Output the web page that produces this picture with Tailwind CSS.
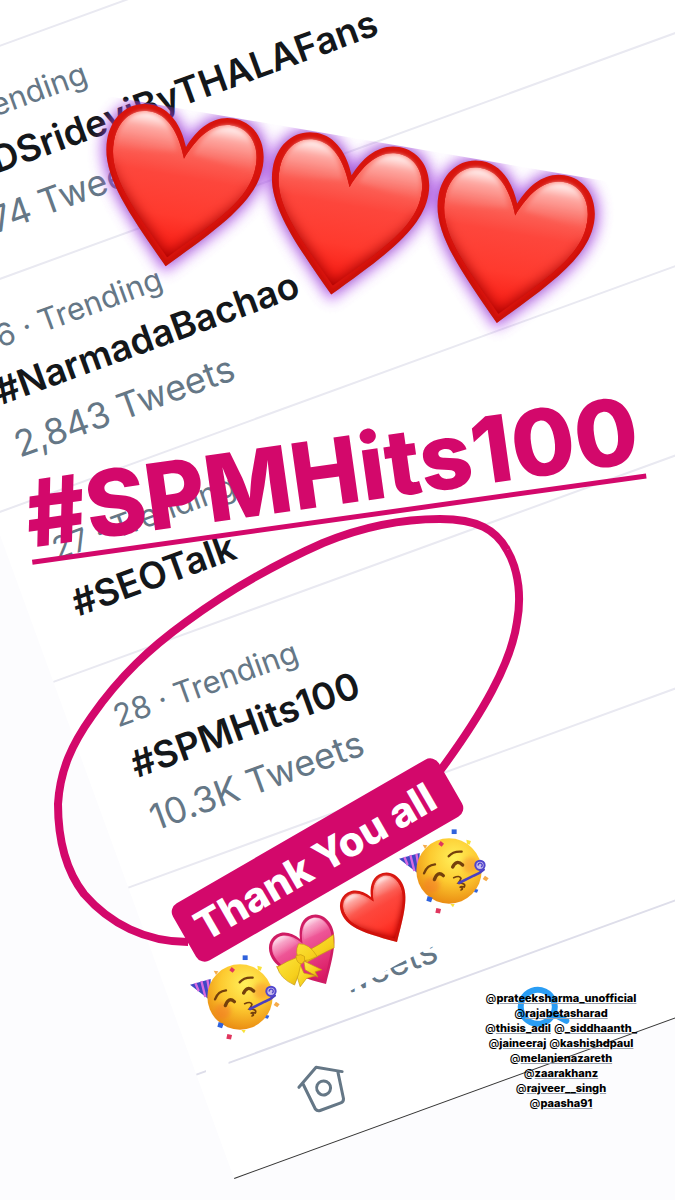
<!DOCTYPE html>
<html lang="en">
<head>
    <meta charset="UTF-8">
    <meta name="viewport" content="width=device-width, initial-scale=1.0">
    <title>#SPMHits100</title>
    <script src="https://cdn.jsdelivr.net/npm/@tailwindcss/browser@4"></script>
</head>
<body class="bg-[#fcfcfe] font-['Inter','Liberation_Sans',sans-serif]">
    <main class="relative w-full min-h-[1200px] overflow-hidden">

        <!-- Tilted trends list -->
        <div class="absolute top-0 -left-[183px] w-[160vw] origin-[183px_0px] -rotate-20 bg-white text-[#657786] whitespace-nowrap">
            <ul class="pt-[42px]">
                <li class="border-t-2 border-[#e9e9f1] pl-[45px] pt-[30px] pb-[29px]">
                    <p class="text-[31px] leading-[46px]">25 · Trending</p>
                    <h2 class="text-[37px] leading-[58px] font-semibold text-[#14171a]">#HBDSrideviByTHALAFans</h2>
                    <p class="text-[36px] leading-[54px]">2,674 Tweets</p>
                </li>
                <li class="border-t-2 border-[#e9e9f1] pl-[45px] pt-[30px] pb-[29px]">
                    <p class="text-[31px] leading-[46px]">26 · Trending</p>
                    <h2 class="text-[37px] leading-[58px] font-semibold text-[#14171a]">#NarmadaBachao</h2>
                    <p class="text-[36px] leading-[54px]">2,843 Tweets</p>
                </li>
                <li class="border-t-2 border-[#e9e9f1] pl-[45px] pt-[30px] pb-9">
                    <p class="text-[31px] leading-[46px]">27 · Trending</p>
                    <h2 class="mt-1.5 text-[37px] leading-[58px] font-semibold text-[#14171a]">#SEOTalk</h2>
                </li>
                <li class="border-t-2 border-[#e9e9f1] pl-[45px] pt-[30px] pb-[29px]">
                    <p class="text-[31px] leading-[46px]">28 · Trending</p>
                    <h2 class="text-[37px] leading-[58px] font-semibold text-[#14171a]">#SPMHits100</h2>
                    <p class="text-[36px] leading-[54px]">10.3K Tweets</p>
                </li>
                <li class="border-t-2 border-[#e9e9f1] pl-[45px] pt-[134px] pb-[9px]">
                    <p class="text-[36px] leading-[54px]">2,519 Tweets</p>
                </li>
            </ul>
            <nav class="flex h-[112px] items-center border-t-2 border-b border-t-[#dedeea] border-b-[#333]">
                <a href="#" aria-label="Home" class="flex w-[229px] justify-center">
                    <svg class="size-14" viewBox="-28 -28 56 56" fill="none" stroke="#657786" stroke-width="3" stroke-linecap="round" stroke-linejoin="round">
                        <path d="M-23 -9L0 -22L23 -9M-18 -11L-15 17Q-14 20 -11 20H11Q14 20 15 17L19 -11"/>
                        <circle r="7"/>
                    </svg>
                </a>
                <a href="#" aria-label="Search" class="flex w-[229px] justify-center">
                    <svg class="size-14" viewBox="-28 -25 56 56" fill="none" stroke="#2a9df4" stroke-width="6" stroke-linecap="round">
                        <circle r="17"/>
                        <path d="M12 12L22 23"/>
                    </svg>
                </a>
            </nav>
        </div>

        <!-- Drawings and emoji stickers -->
        <svg class="absolute top-0 left-0 w-[675px] h-[1200px]" viewBox="0 0 675 1200">
            <defs>
                <path id="heart" d="M0 0C8 -20 22 -36 42 -36C64 -36 79 -18 79 6C79 42 44 76 0 121C-44 76 -79 42 -79 6C-79 -18 -64 -36 -42 -36C-22 -36 -8 -20 0 0Z"/>
                <path id="heartInner" d="M0 12C10 -14 24 -29 42 -29C60 -29 72 -14 72 7C72 42 40 70 0 112C-40 70 -72 42 -72 7C-72 -14 -60 -29 -42 -29C-24 -29 -10 -14 0 12Z"/>
                <clipPath id="heartClip"><use href="#heart"/></clipPath>
                <clipPath id="innerClip"><use href="#heartInner"/></clipPath>
                <clipPath id="glowClip"><rect x="-110" y="-37" width="560" height="200"/></clipPath>
                <filter id="soft" x="-30%" y="-30%" width="160%" height="160%"><feGaussianBlur stdDeviation="7"/></filter>
                <filter id="soft2" x="-30%" y="-30%" width="160%" height="160%"><feGaussianBlur stdDeviation="2"/></filter>
                <linearGradient id="red" x1="0" y1="0" x2="0" y2="1">
                    <stop offset="0" stop-color="#ff8d84"/>
                    <stop offset=".2" stop-color="#fb6a60"/>
                    <stop offset=".42" stop-color="#fd463c"/>
                    <stop offset=".7" stop-color="#ff3a2e"/>
                    <stop offset="1" stop-color="#f81810"/>
                </linearGradient>
                <linearGradient id="gloss" x1="0" y1="0" x2="0" y2="1">
                    <stop offset="0" stop-color="#fff" stop-opacity=".95"/>
                    <stop offset=".35" stop-color="#fff" stop-opacity=".35"/>
                    <stop offset="1" stop-color="#fff" stop-opacity="0"/>
                </linearGradient>
                <linearGradient id="pink" x1="0" y1="0" x2="0" y2="1">
                    <stop offset="0" stop-color="#f9a3c8"/>
                    <stop offset=".3" stop-color="#ee5596"/>
                    <stop offset="1" stop-color="#d8145f"/>
                </linearGradient>
                <linearGradient id="ribbon" x1="0" y1="0" x2="1" y2="1">
                    <stop offset="0" stop-color="#fff04a"/>
                    <stop offset=".6" stop-color="#f6cf1c"/>
                    <stop offset="1" stop-color="#c98f08"/>
                </linearGradient>
                <radialGradient id="skin" cx=".58" cy=".3" r=".75">
                    <stop offset="0" stop-color="#fff05a"/>
                    <stop offset=".5" stop-color="#fdca30"/>
                    <stop offset="1" stop-color="#e8850f"/>
                </radialGradient>
                <g id="glossMarks" fill="url(#gloss)">
                    <path d="M-70 14C-72 -12 -60 -28 -42 -28C-26 -28 -14 -14 -8 6Z"/>
                    <path d="M70 14C72 -12 60 -28 42 -28C26 -28 14 -14 8 6Z"/>
                </g>
                <g id="redHeart">
                    <use href="#heart" fill="#d8140d"/>
                    <g clip-path="url(#innerClip)">
                        <use href="#heartInner" fill="url(#red)"/>
                        <path d="M-80 30C-70 52 -38 80 0 120C38 80 70 52 80 30" fill="none" stroke="#a00500" stroke-width="13" filter="url(#soft)"/>
                    </g>
                    <use href="#glossMarks" filter="url(#soft2)"/>
                    <path d="M-79 20C-74 48 -40 80 0 121C40 80 74 48 79 20" fill="none" stroke="#b80a04" stroke-width="5" opacity=".6" clip-path="url(#heartClip)" filter="url(#soft2)"/>
                </g>
                <g id="party">
                    <path d="M-150 -37L-88 -54L-90 10Z" fill="#4048c4"/>
                    <path d="M-134 -42L-124 -18M-116 -48L-104 0M-98 -52L-88 6" stroke="#d76be0" stroke-width="7"/>
                    <circle r="98" fill="url(#skin)"/>
                    <circle cx="-52" cy="42" r="24" fill="#f46a2c" opacity=".4" filter="url(#soft)"/>
                    <circle cx="64" cy="-18" r="24" fill="#f4782c" opacity=".4" filter="url(#soft)"/>
                    <g fill="none" stroke="#74400c" stroke-linecap="round">
                        <path stroke-width="7" d="M-75 7Q-66 -18 -42 -20M-1 -44Q12 -60 38 -58"/>
                        <path stroke-width="10" d="M-44 26Q-34 -2 -17 14M11 -12Q22 -36 41 -18"/>
                        <path stroke-width="5" d="M14 20Q32 12 36 22Q34 30 28 36Q52 36 46 48Q36 46 34 48Q46 54 36 57"/>
                    </g>
                    <path d="M30 36L74 14Q92 8 104 -4" fill="none" stroke="#4b3fc0" stroke-width="8" stroke-linecap="round"/>
                    <circle cx="93" cy="-17" r="14" fill="#c9bdea" stroke="#5146cc" stroke-width="6"/>
                    <path d="M88 -16A6 6 0 1 1 96 -12" fill="none" stroke="#5146cc" stroke-width="4"/>
                    <g fill="#2f62dc">
                        <path d="M8 -125H23V-111H8Z"/>
                        <path d="M-64 75L-49 80L-54 94L-68 89Z"/>
                        <path d="M80 54L88 56L84 65L75 63Z"/>
                    </g>
                    <g fill="#e0365e">
                        <path d="M-25 -90L-15 -82L-22 -73L-32 -80Z"/>
                        <path d="M-38 111L-24 114L-27 128L-41 125Z"/>
                    </g>
                    <g fill="#f9e23a">
                        <path d="M52 -94L66 -90L62 -79L54 -82Z"/>
                        <path d="M4 99H17L12 109Z"/>
                    </g>
                    <g fill="#f5ab4a">
                        <path d="M-79 -79L-65 -77L-72 -66Z"/>
                        <path d="M108 14L119 22L112 31L101 24Z"/>
                    </g>
                </g>
            </defs>

            <!-- erased part of trend 29 -->
            <path d="M190 962L440 820L470 900L440 941L434 946L400 963L350 991L330 1004L200 1062Z" fill="#fff"/>
            <path d="M206 1060L228 1054L229 1070L206 1080Z" fill="#fff"/>

            <!-- three glowing hearts -->
            <g transform="translate(186 147) rotate(9.7)">
                <g clip-path="url(#glowClip)">
                    <g stroke="#b04cf0" stroke-width="9" opacity=".8" filter="url(#soft)">
                        <use href="#heart"/>
                        <use href="#heart" x="168"/>
                        <use href="#heart" x="336"/>
                    </g>
                </g>
                <use href="#redHeart"/>
                <use href="#redHeart" x="168"/>
                <use href="#redHeart" x="336"/>
            </g>

            <!-- loop round trend 28 -->
            <path d="M188 942C146 942 110 924 84 894C64 868 58 836 58 804C60 770 72 744 92 716C120 676 150 648 186 622C232 588 280 562 323 543C362 527 402 519 440 519C478 519 496 530 507 550C520 572 521 600 517 622C511 664 482 714 440 771" fill="none" stroke="#d3086b" stroke-width="8"/>

            <!-- small emoji row -->
            <use href="#redHeart" transform="translate(371 897) rotate(-30) scale(.43)"/>
            <g transform="translate(300 939) rotate(-30) scale(.43)">
                <use href="#heart" fill="#cf1c64"/>
                <use href="#heartInner" fill="url(#pink)"/>
                <use href="#glossMarks" opacity=".7"/>
            </g>
            <g transform="translate(160 740) scale(.333)" stroke="#c59a10" stroke-width="2" stroke-linejoin="round">
                <path d="M430 640Q480 616 521 584L523 624Q485 642 440 668ZM350 680Q375 684 408 662L418 676Q390 690 362 700Z" fill="url(#ribbon)"/>
                <path d="M432 664L486 690L466 696L474 712L436 690Z" fill="url(#ribbon)"/>
                <path d="M418 668L432 700L468 708L440 716L421 741L412 712Z" fill="url(#ribbon)"/>
                <path d="M416 612Q448 610 472 650Q446 664 422 664Q402 640 416 612ZM414 652Q380 664 352 682Q360 716 404 736Q418 706 424 668Z" fill="url(#ribbon)"/>
                <path d="M408 648Q424 640 434 650Q438 664 426 672Q410 672 408 648Z" fill="#f5c71a"/>
            </g>
            <use href="#party" transform="translate(240 997) scale(.333)"/>
            <use href="#party" transform="translate(449 871) scale(.333)"/>
        </svg>

        <!-- Big hashtag -->
        <h1 class="absolute top-[427px] left-[23px] w-[620px] -rotate-8 border-b-5 border-[#d3086b] pr-2 text-center text-[92px] leading-[90px] font-extrabold text-[#d3086b]">
            #SPMHits100
        </h1>

        <!-- Label -->
        <p class="absolute top-[827px] left-[164px] w-[307px] -rotate-30 rounded-[10px] bg-[#d3086b] pr-1.5 text-center text-[41px] leading-[66px] font-extrabold text-white">
            Thank You all
        </p>

        <!-- Mentions -->
        <div class="absolute top-[991px] left-[471px] w-[180px] text-center text-[11px] leading-[15px] font-medium text-black whitespace-nowrap">
            <p>@<a href="#" class="font-extrabold underline decoration-gray-400">prateeksharma_unofficial</a></p>
            <p>@<a href="#" class="font-extrabold underline decoration-gray-400">rajabetasharad</a></p>
            <p>@<a href="#" class="font-extrabold underline decoration-gray-400">thisis_adil</a> @<a href="#" class="font-extrabold underline decoration-gray-400">_siddhaanth_</a></p>
            <p>@<a href="#" class="font-extrabold underline decoration-gray-400">jaineeraj</a> @<a href="#" class="font-extrabold underline decoration-gray-400">kashishdpaul</a></p>
            <p>@<a href="#" class="font-extrabold underline decoration-gray-400">melanienazareth</a></p>
            <p>@<a href="#" class="font-extrabold underline decoration-gray-400">zaarakhanz</a></p>
            <p>@<a href="#" class="font-extrabold underline decoration-gray-400">rajveer__singh</a></p>
            <p>@<a href="#" class="font-extrabold underline decoration-gray-400">paasha91</a></p>
        </div>
    </main>
</body>
</html>
